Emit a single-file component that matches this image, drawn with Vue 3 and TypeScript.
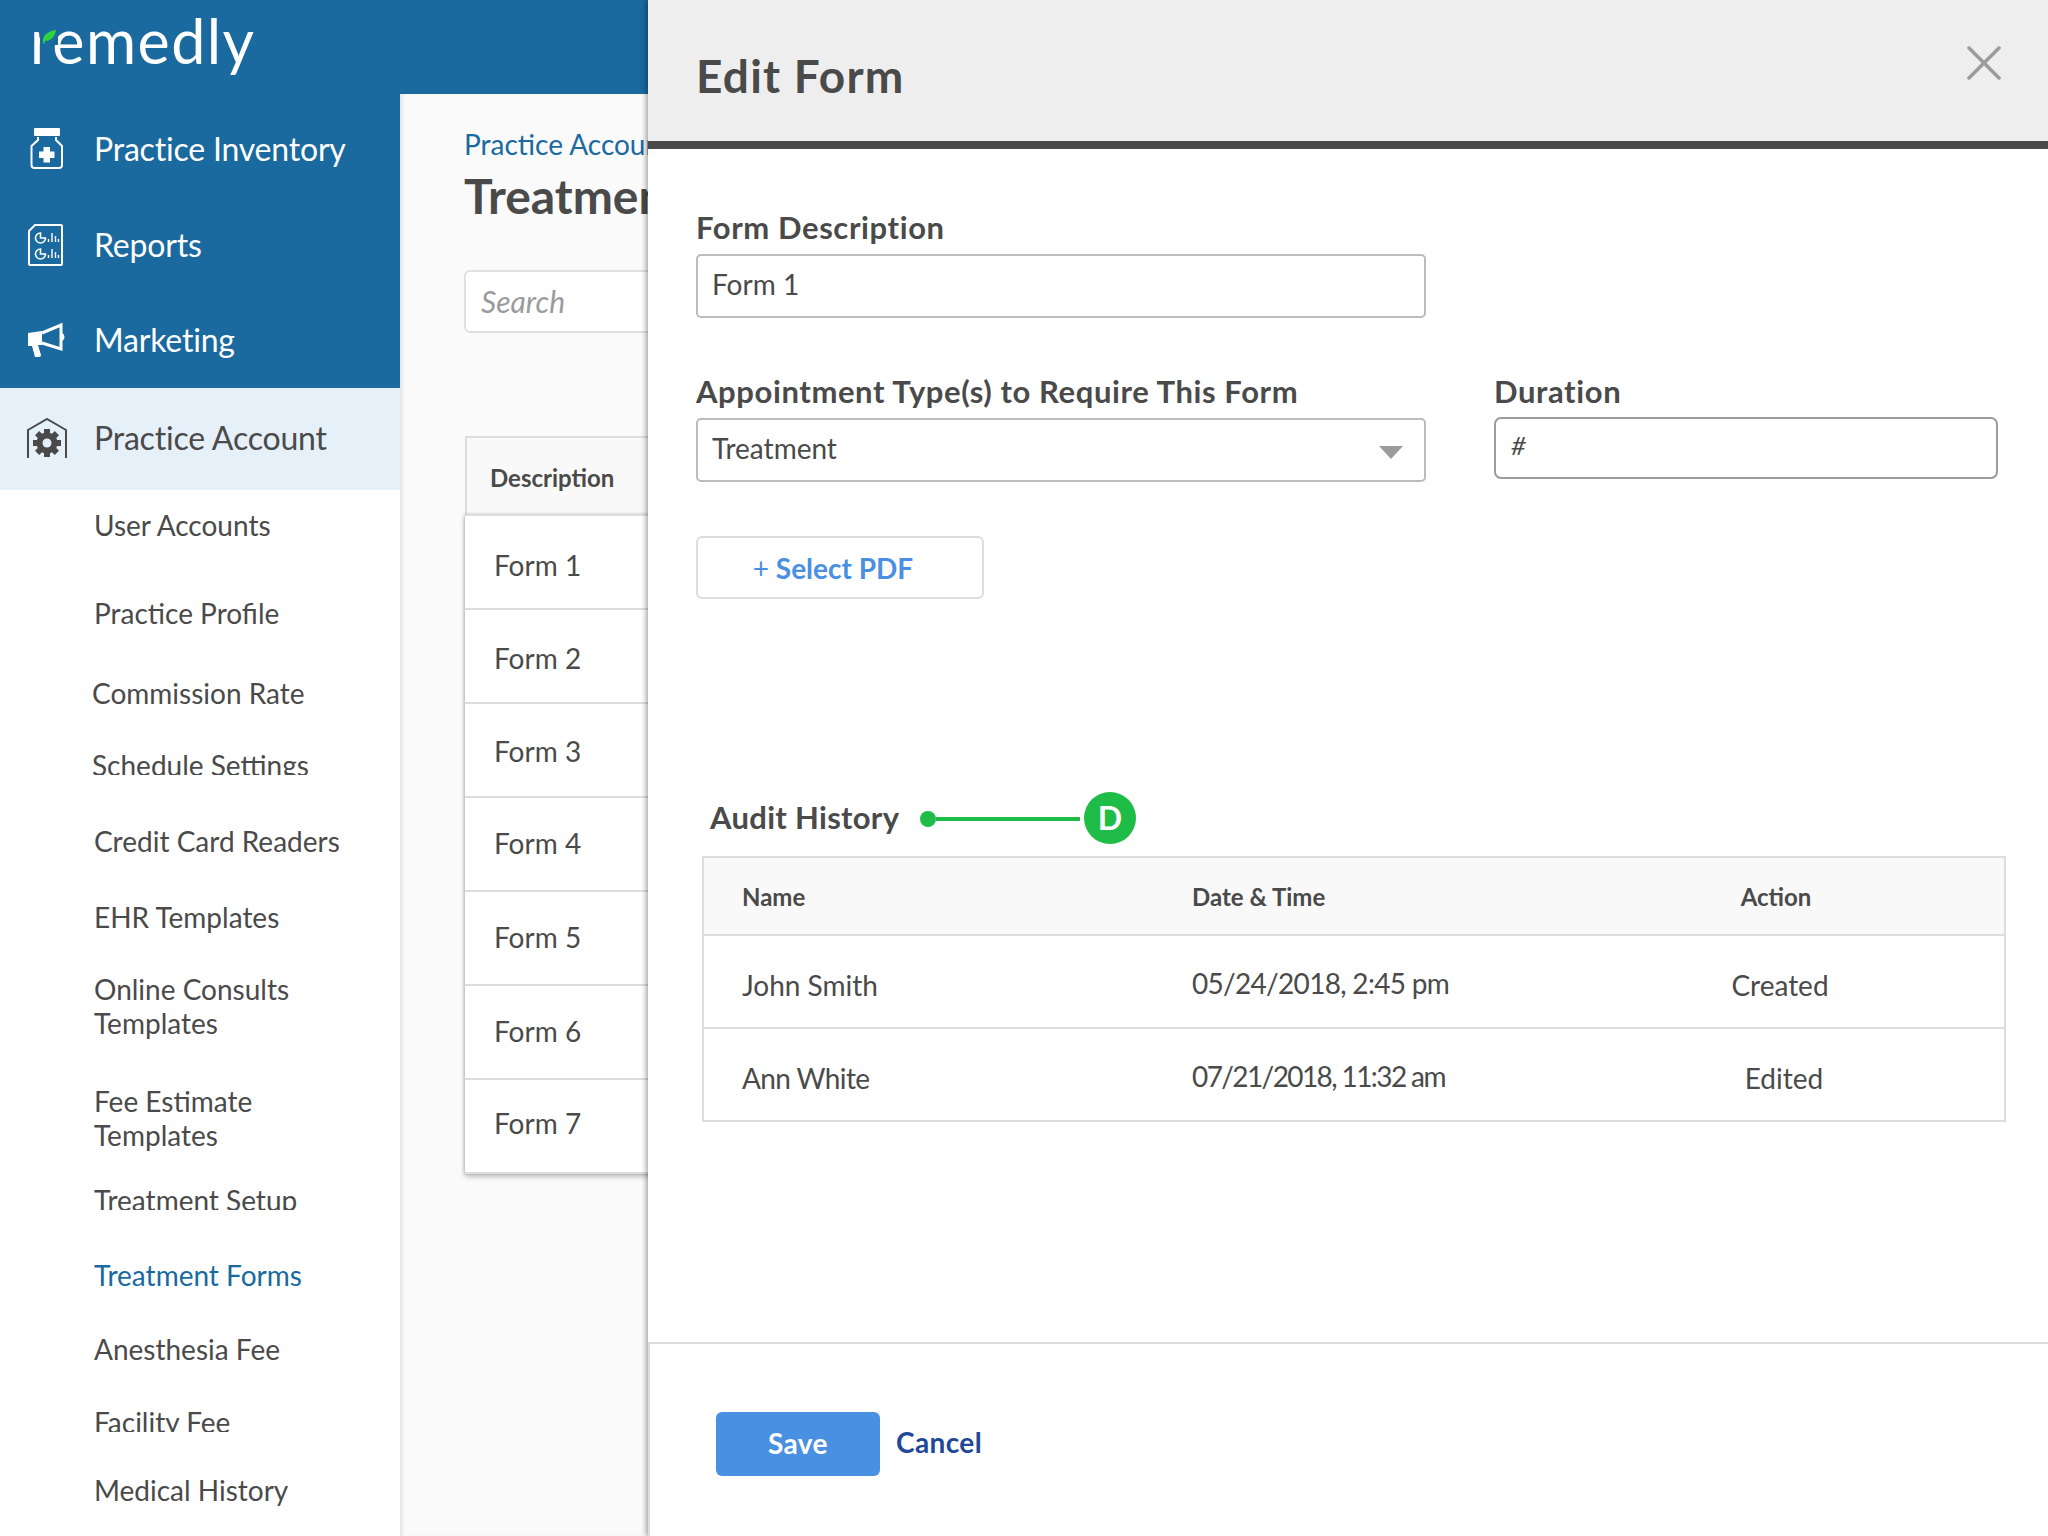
<script setup lang="ts">
interface SubItem {
  label: string;
  nudge?: boolean;
  clip?: boolean;
  active?: boolean;
}

const subItems: SubItem[] = [
  { label: 'User Accounts' },
  { label: 'Practice Profile' },
  { label: 'Commission Rate', nudge: true },
  { label: 'Schedule Settings', nudge: true, clip: true },
  { label: 'Credit Card Readers' },
  { label: 'EHR Templates' },
  { label: 'Online Consults Templates' },
  { label: 'Fee Estimate Templates' },
  { label: 'Treatment Setup', clip: true },
  { label: 'Treatment Forms', active: true },
  { label: 'Anesthesia Fee' },
  { label: 'Facility Fee', clip: true },
  { label: 'Medical History' },
];

// lh: row text drifts a little upwards from row to row
const forms = [
  { name: 'Form 1', lh: 99 },
  { name: 'Form 2', lh: 97 },
  { name: 'Form 3', lh: 95 },
  { name: 'Form 4', lh: 91 },
  { name: 'Form 5', lh: 91 },
  { name: 'Form 6', lh: 91 },
  { name: 'Form 7', lh: 87 },
];

const audit = [
  { name: 'John Smith', date: '05/24/2018, 2:45 pm', action: 'Created' },
  { name: 'Ann White', date: '07/21/2018, 11:32 am', action: 'Edited' },
];
</script>

<template>
  <div class="page">
    <aside class="sidebar">
      <div class="logo">
        <span class="logo-text">remedly</span>
        <svg class="logo-leaf" width="18" height="16" viewBox="0 0 18 16">
          <rect x="0" y="0" width="18" height="16" fill="#1a699f" />
          <path d="M3 14 C2 7 7 2 16 1 C15 8 11 12 5 12 L4 15 Z" fill="#2fd33f" />
        </svg>
      </div>

      <nav class="nav">
        <a class="nav-item">
          <svg class="nav-icon" width="40" height="42" viewBox="0 0 40 42">
            <rect x="8" y="0" width="26" height="8" rx="1" fill="#fff" />
            <path d="M12 9 V12 L5.5 18 V37 Q5.5 40 8.5 40 H33 Q36 40 36 37 V18 L30 12 V9" fill="none" stroke="#fff" stroke-width="2" />
            <path d="M17.5 19 H24 V23.5 H28.5 V30 H24 V34.5 H17.5 V30 H13 V23.5 H17.5 Z" fill="#fff" />
          </svg>
          <span>Practice Inventory</span>
        </a>
        <a class="nav-item">
          <svg class="nav-icon" width="40" height="42" viewBox="0 0 40 42">
            <path d="M9 1 H35 Q36 1 36 2 V40 Q36 41 35 41 H4 Q3 41 3 40 V7 Z" fill="none" stroke="#fff" stroke-width="2" />
            <g fill="none" stroke="#fff" stroke-width="1.6">
              <path d="M14.5 9 A5 5 0 1 0 19.5 14 H14.5 Z" />
              <path d="M14.5 25 A5 5 0 1 0 19.5 30 H14.5 Z" />
            </g>
            <path d="M22.5 18 V15 M26 18 V9 M29.5 18 V12 M32.5 18 V15 M22.5 34 V31 M26 34 V25 M29.5 34 V28 M32.5 34 V31" stroke="#fff" stroke-width="1.4" />
          </svg>
          <span>Reports</span>
        </a>
        <a class="nav-item nav-item--last">
          <svg class="nav-icon" width="40" height="36" viewBox="0 0 40 36">
            <path d="M2 11 L16 9 L16 23 L12 23 L15 33 Q15 35 12 35 H9 L6 24 H2 Z" fill="#fff" />
            <path d="M16 11 L35 3 V27 L16 21" fill="none" stroke="#fff" stroke-width="3" />
            <path d="M36 11 Q40 15 36 19" fill="#fff" stroke="#fff" stroke-width="1" />
          </svg>
          <span>Marketing</span>
        </a>
        <a class="nav-item nav-item--active">
          <svg class="nav-icon" width="42" height="40" viewBox="0 0 42 40">
            <path d="M2 40 V12 L21 1 L40 12 V40" fill="none" stroke="#4a4a4a" stroke-width="2" />
            <g transform="translate(21 25)" fill="#4a4a4a">
              <rect x="-3" y="-14" width="6" height="28" />
              <rect x="-3" y="-14" width="6" height="28" transform="rotate(45)" />
              <rect x="-3" y="-14" width="6" height="28" transform="rotate(90)" />
              <rect x="-3" y="-14" width="6" height="28" transform="rotate(135)" />
              <circle r="10.5" />
              <circle r="4.5" fill="#e6f0f9" />
            </g>
          </svg>
          <span>Practice Account</span>
        </a>
      </nav>

      <ul class="subnav">
        <li
          v-for="item in subItems"
          :key="item.label"
          class="subnav-item"
          :class="{ 'is-nudged': item.nudge, 'is-clipped': item.clip, 'is-active': item.active }"
        >
          <span>{{ item.label }}</span>
        </li>
      </ul>
    </aside>

    <div class="content">
      <div class="topbar"></div>
      <main class="main">
        <div class="crumb">Practice Account</div>
        <h1 class="main-title">Treatment Forms</h1>
        <div class="search">Search</div>
        <div class="list">
          <div class="list-head">Description</div>
          <div class="list-body">
            <div
              v-for="f in forms"
              :key="f.name"
              class="list-row"
              :style="{ lineHeight: f.lh + 'px' }"
            >{{ f.name }}</div>
          </div>
        </div>
      </main>
    </div>

    <section class="panel">
      <header class="panel-head">
        <h2>Edit Form</h2>
        <svg class="close" width="34" height="34" viewBox="0 0 34 34">
          <path d="M2 2 L32 32 M32 2 L2 32" stroke="#9b9b9b" stroke-width="3.5" stroke-linecap="round" />
        </svg>
      </header>

      <div class="panel-body">
        <label class="label">Form Description</label>
        <div class="input input--first">Form 1</div>

        <div class="two-col">
          <div>
            <label class="label">Appointment Type(s) to Require This Form</label>
            <div class="input input--select">
              Treatment
              <span class="caret"></span>
            </div>
          </div>
          <div>
            <label class="label">Duration</label>
            <div class="input input--duration">#</div>
          </div>
        </div>

        <button type="button" class="select-pdf"><span class="plus">+</span> Select PDF</button>

        <div class="audit-title">
          <span class="audit-text">Audit History</span>
          <span class="pin-dot"></span>
          <span class="pin-line"></span>
          <span class="pin-badge">D</span>
        </div>

        <div class="audit">
          <div class="audit-row audit-row--head">
            <div>Name</div>
            <div>Date &amp; Time</div>
            <div class="audit-action">Action</div>
          </div>
          <div v-for="row in audit" :key="row.name" class="audit-row">
            <div class="audit-name">{{ row.name }}</div>
            <div class="audit-date">{{ row.date }}</div>
            <div class="audit-action">{{ row.action }}</div>
          </div>
        </div>
      </div>

      <footer class="panel-foot">
        <button type="button" class="save">Save</button>
        <a class="cancel">Cancel</a>
      </footer>
    </section>
  </div>
</template>

<style>
html, body { margin: 0; background: #fff; }
</style>

<style scoped>
* { box-sizing: border-box; }

.page {
  position: relative;
  display: flex;
  width: 2048px;
  height: 1536px;
  overflow: hidden;
  font-family: Lato, "Liberation Sans", sans-serif;
  color: #4a4a4a;
}

/* 左侧导航 */
.sidebar {
  flex: 0 0 400px;
  background: #fff;
}
.logo {
  position: relative;
  height: 94px;
  padding: 3px 0 0 30px;
  background: #1a699f;
}
.logo-text {
  font-size: 61px;
  line-height: 76px;
  color: #fff;
  letter-spacing: 1.4px;
}
.logo-leaf {
  position: absolute;
  left: 40px;
  top: 29px;
}
.nav {
  display: grid;
  grid-template-rows: 104px 96px 94px 102px;
  background: #1a699f;
}
.nav-item {
  display: flex;
  align-items: center;
  padding: 0 0 3px 94px;
  position: relative;
  font-size: 32px;
  letter-spacing: -0.2px;
  color: #fff;
}
.nav-item:first-child { padding-top: 8px; }
.nav-item--active {
  background: #e6f0f9;
  color: #4a4a4a;
}
.nav-icon {
  position: absolute;
  left: 26px;
}
.subnav {
  display: grid;
  grid-template-rows: 70px 105px 56px 88px 64px 88px 90px 134px 30px 120px 28px 118px 18px;
  align-items: center;
  list-style: none;
  margin: 0;
  padding: 0;
}
.subnav-item {
  padding: 0 40px 0 94px;
  font-size: 28px;
  line-height: 34px;
}
.subnav-item.is-nudged { padding-left: 92px; }
.subnav-item.is-active { color: #1a699f; }
.subnav-item.is-clipped span {
  display: block;
  height: 24px;
  margin-bottom: 4px;
  overflow: hidden;
  line-height: 28px;
}

/* 主内容 */
.content {
  flex: 1;
  display: flex;
  flex-direction: column;
}
.topbar {
  height: 94px;
  background: #1a699f;
}
.main {
  flex: 1;
  padding: 30px 0 0 64px;
  background: #fafafa;
  box-shadow: inset 4px 0 4px -2px rgba(0, 0, 0, 0.1);
}
.crumb {
  font-size: 28px;
  line-height: 40px;
  color: #1a699f;
  white-space: nowrap;
}
.main-title {
  margin: 4px 0 0;
  font-size: 48px;
  line-height: 56px;
  font-weight: 700;
  white-space: nowrap;
}
.search {
  width: 400px;
  height: 63px;
  margin-top: 46px;
  padding-left: 15px;
  border: 2px solid #e0e0e0;
  border-radius: 6px;
  background: #fff;
  font-size: 30px;
  line-height: 59px;
  font-style: italic;
  color: #9b9b9b;
}
.list {
  width: 500px;
  margin: 103px 0 0 1px;
}
.list-head {
  height: 78px;
  padding-left: 23px;
  border: 2px solid #ddd;
  border-bottom: 0;
  background: #f9f9f9;
  font-size: 24px;
  line-height: 80px;
  font-weight: 700;
}
.list-body {
  border-bottom: 2px solid #ddd;
  box-shadow: 0 3px 5px rgba(0, 0, 0, 0.22), -1px 0 3px rgba(0, 0, 0, 0.18);
  background: #fff;
}
.list-row {
  height: 94px;
  padding-left: 29px;
  border-top: 2px solid #ddd;
  font-size: 28px;
}

/* 右侧抽屉 */
.panel {
  position: absolute;
  top: 0;
  right: 0;
  bottom: 0;
  left: 648px;
  display: flex;
  flex-direction: column;
  background: #fff;
  box-shadow: -2px 0 5px rgba(0, 0, 0, 0.35);
}
.panel-head {
  position: relative;
  flex: 0 0 149px;
  padding: 10px 0 0 48px;
  background: #eee;
  border-bottom: 8px solid #4a4a4a;
}
.panel-head h2 {
  margin: 0;
  font-size: 46px;
  line-height: 131px;
  font-weight: 700;
  letter-spacing: 1.2px;
}
.close {
  position: absolute;
  top: 46px;
  right: 47px;
}
.panel-body {
  flex: 1;
  padding: 61px 43px 0 48px;
}
.label {
  display: block;
  font-size: 31px;
  line-height: 34px;
  font-weight: 700;
  letter-spacing: 0.6px;
  white-space: nowrap;
}
.input {
  position: relative;
  width: 730px;
  height: 64px;
  margin-top: 10px;
  padding-left: 14px;
  border: 2px solid #bbb;
  border-radius: 5px;
  font-size: 28px;
  line-height: 57px;
}
.two-col {
  display: grid;
  grid-template-columns: 730px 504px;
  column-gap: 68px;
  margin-top: 56px;
}
.input--duration {
  width: 504px;
  height: 62px;
  margin-top: 9px;
  padding-left: 15px;
  border-color: #9b9b9b;
  border-radius: 7px;
  line-height: 52px;
  font-size: 26px;
  font-style: italic;
}
.caret {
  position: absolute;
  top: 26px;
  right: 21px;
  width: 0;
  height: 0;
  border-left: 12px solid transparent;
  border-right: 12px solid transparent;
  border-top: 13px solid #9b9b9b;
}
.select-pdf {
  display: block;
  width: 288px;
  height: 63px;
  margin-top: 54px;
  padding: 0 14px 0 0;
  border: 2px solid #ddd;
  border-radius: 6px;
  background: #fff;
  font-family: inherit;
  font-size: 28px;
  font-weight: 700;
  color: #4a90e2;
}
.plus { font-weight: 400; }
.audit-title {
  display: flex;
  align-items: center;
  height: 52px;
  margin: 193px 0 0 14px;
}
.audit-text {
  width: 210px;
  padding-bottom: 2px;
  font-size: 31px;
  font-weight: 700;
  letter-spacing: 0.3px;
}
.pin-dot {
  width: 16px;
  height: 16px;
  margin-top: 1px;
  border-radius: 50%;
  background: #1fbc48;
}
.pin-line {
  width: 144px;
  height: 4px;
  margin-top: 1px;
  background: #1fbc48;
}
.pin-badge {
  width: 52px;
  height: 52px;
  margin-left: 4px;
  border-radius: 50%;
  background: #1fbc48;
  color: #fff;
  font-size: 32px;
  font-weight: 700;
  line-height: 52px;
  text-align: center;
}
.audit {
  width: 1304px;
  margin: 12px 0 0 6px;
  border: 2px solid #ddd;
}
.audit-row {
  display: grid;
  grid-template-columns: 450px 1fr 290px;
  align-items: center;
  height: 93px;
  padding: 6px 0 0 38px;
  border-top: 2px solid #ddd;
  font-size: 28px;
}
.audit-row:last-child { height: 93px; }
.audit-row--head {
  height: 76px;
  padding-top: 0;
  border-top: 0;
  background: #f9f9f9;
  font-size: 24px;
  font-weight: 700;
}
.audit-date {
  padding-bottom: 3px;
  letter-spacing: -0.7px;
}
.audit-action {
  padding-right: 166px;
  text-align: center;
}
.audit-row:nth-child(2) .audit-action { padding-left: 8px; }
.audit-row:nth-child(3) .audit-action { padding-left: 16px; }
.audit-row:nth-child(3) .audit-date { letter-spacing: -1.6px; }
.audit-row:nth-child(3) .audit-name { letter-spacing: -0.6px; }
.panel-foot {
  flex: 0 0 194px;
  display: flex;
  align-items: flex-start;
  padding: 68px 0 0 66px;
  border-top: 2px solid #ddd;
  border-left: 2px solid #ddd;
}
.save {
  width: 164px;
  height: 64px;
  padding: 0 0 2px;
  border: 0;
  border-radius: 6px;
  background: #4a90e2;
  color: #fff;
  font-family: inherit;
  font-size: 28px;
  font-weight: 700;
  letter-spacing: 0.4px;
}
.cancel {
  margin-left: 16px;
  font-size: 28px;
  line-height: 60px;
  font-weight: 700;
  letter-spacing: 0.4px;
  color: #1f4899;
}
</style>
